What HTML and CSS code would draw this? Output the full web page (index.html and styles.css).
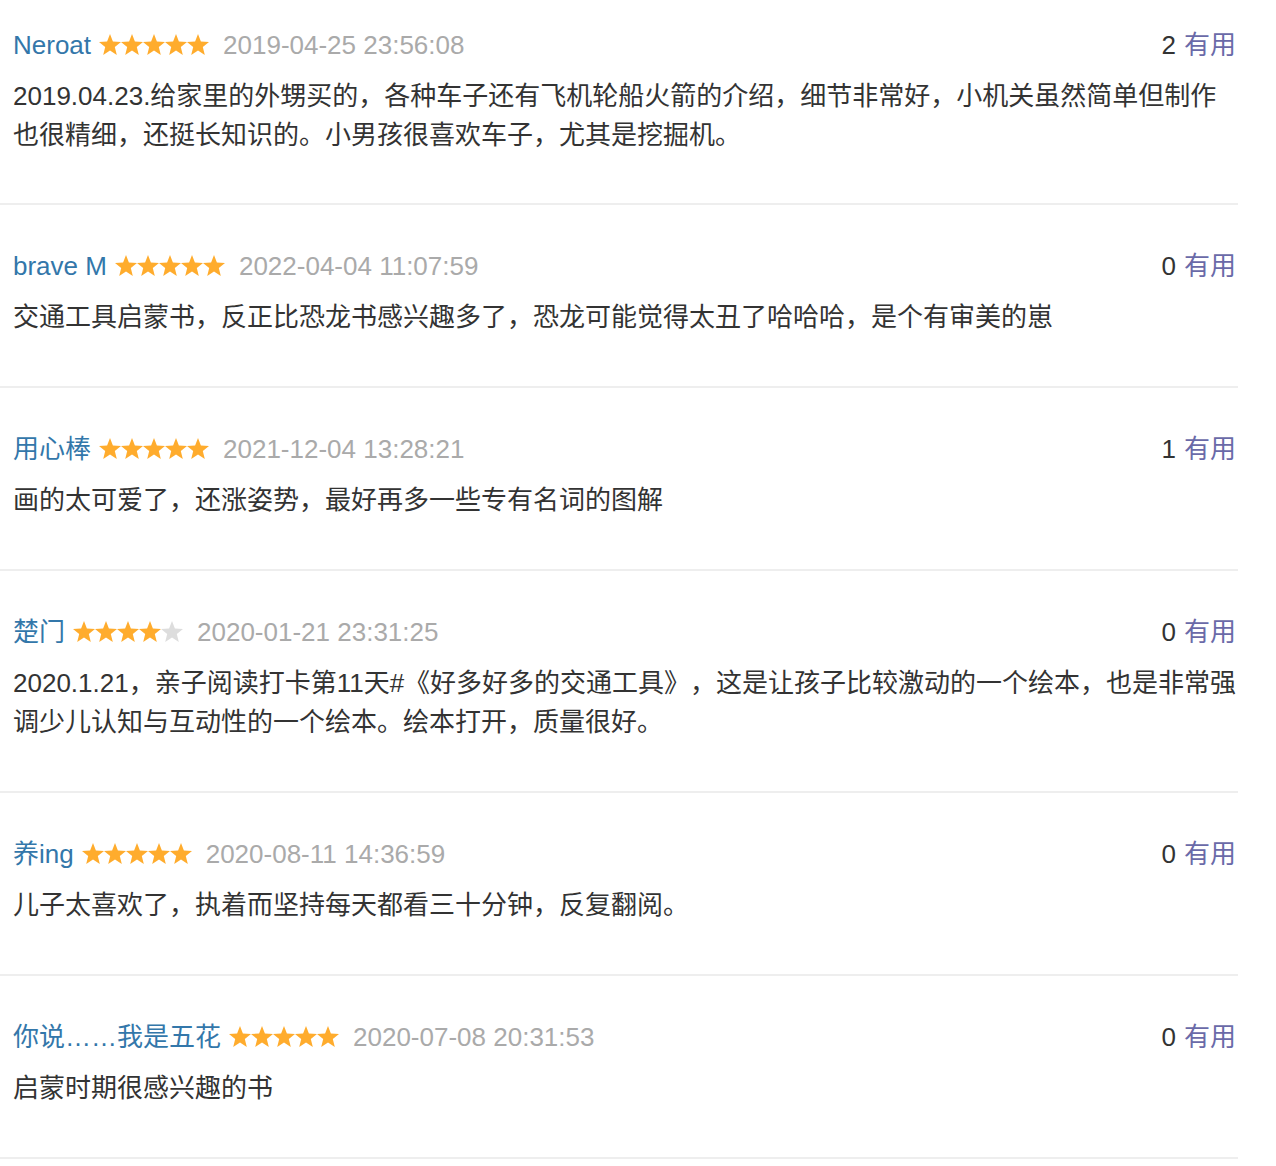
FILE: index.html
```html
<!DOCTYPE html>
<html lang="zh-CN">
<head>
<meta charset="utf-8">
<title>短评</title>
<link rel="stylesheet" href="styles.css">
</head>
<body>
<svg width="0" height="0" class="defs" aria-hidden="true">
  <defs>
    <symbol id="star" viewBox="0 0 22 21">
      <path d="M11 0L13.9 7.5L22 8L15.8 13.1L17.8 20.9L11 16.6L4.2 20.9L6.2 13.1L0 8L8.1 7.5Z"/>
    </symbol>
  </defs>
</svg>
<div class="list">
  <div class="item">
    <div class="head">
      <div class="info">
        <a class="name">Neroat</a>
        <span class="stars"><svg class="on"><use href="#star"/></svg><svg class="on"><use href="#star"/></svg><svg class="on"><use href="#star"/></svg><svg class="on"><use href="#star"/></svg><svg class="on"><use href="#star"/></svg></span>
        <span class="time">2019-04-25 23:56:08</span>
      </div>
      <div class="vote"><span class="count">2</span><a class="useful">有用</a></div>
    </div>
    <p class="text">2019.04.23.给家里的外甥买的，各种车子还有飞机轮船火箭的介绍，细节非常好，小机关虽然简单但制作也很精细，还挺长知识的。小男孩很喜欢车子，尤其是挖掘机。</p>
  </div>
  <div class="item">
    <div class="head">
      <div class="info">
        <a class="name">brave M</a>
        <span class="stars"><svg class="on"><use href="#star"/></svg><svg class="on"><use href="#star"/></svg><svg class="on"><use href="#star"/></svg><svg class="on"><use href="#star"/></svg><svg class="on"><use href="#star"/></svg></span>
        <span class="time">2022-04-04 11:07:59</span>
      </div>
      <div class="vote"><span class="count">0</span><a class="useful">有用</a></div>
    </div>
    <p class="text">交通工具启蒙书，反正比恐龙书感兴趣多了，恐龙可能觉得太丑了哈哈哈，是个有审美的崽</p>
  </div>
  <div class="item">
    <div class="head">
      <div class="info">
        <a class="name">用心棒</a>
        <span class="stars"><svg class="on"><use href="#star"/></svg><svg class="on"><use href="#star"/></svg><svg class="on"><use href="#star"/></svg><svg class="on"><use href="#star"/></svg><svg class="on"><use href="#star"/></svg></span>
        <span class="time">2021-12-04 13:28:21</span>
      </div>
      <div class="vote"><span class="count">1</span><a class="useful">有用</a></div>
    </div>
    <p class="text">画的太可爱了，还涨姿势，最好再多一些专有名词的图解</p>
  </div>
  <div class="item">
    <div class="head">
      <div class="info">
        <a class="name">楚门</a>
        <span class="stars"><svg class="on"><use href="#star"/></svg><svg class="on"><use href="#star"/></svg><svg class="on"><use href="#star"/></svg><svg class="on"><use href="#star"/></svg><svg class="off"><use href="#star"/></svg></span>
        <span class="time">2020-01-21 23:31:25</span>
      </div>
      <div class="vote"><span class="count">0</span><a class="useful">有用</a></div>
    </div>
    <p class="text">2020.1.21，亲子阅读打卡第11天#《好多好多的交通工具》，这是让孩子比较激动的一个绘本，也是非常强调少儿认知与互动性的一个绘本。绘本打开，质量很好。</p>
  </div>
  <div class="item">
    <div class="head">
      <div class="info">
        <a class="name">养ing</a>
        <span class="stars"><svg class="on"><use href="#star"/></svg><svg class="on"><use href="#star"/></svg><svg class="on"><use href="#star"/></svg><svg class="on"><use href="#star"/></svg><svg class="on"><use href="#star"/></svg></span>
        <span class="time">2020-08-11 14:36:59</span>
      </div>
      <div class="vote"><span class="count">0</span><a class="useful">有用</a></div>
    </div>
    <p class="text">儿子太喜欢了，执着而坚持每天都看三十分钟，反复翻阅。</p>
  </div>
  <div class="item">
    <div class="head">
      <div class="info">
        <a class="name">你说……我是五花</a>
        <span class="stars"><svg class="on"><use href="#star"/></svg><svg class="on"><use href="#star"/></svg><svg class="on"><use href="#star"/></svg><svg class="on"><use href="#star"/></svg><svg class="on"><use href="#star"/></svg></span>
        <span class="time">2020-07-08 20:31:53</span>
      </div>
      <div class="vote"><span class="count">0</span><a class="useful">有用</a></div>
    </div>
    <p class="text">启蒙时期很感兴趣的书</p>
  </div>
</div>
</body>
</html>
```

FILE: styles.css
```css
html, body {
  margin: 0;
  padding: 0;
  background: #fff;
}
body {
  font-family: "Liberation Sans", Arial, "Noto Sans CJK SC", sans-serif;
  font-size: 26px;
  color: #333;
  text-spacing-trim: space-all;
}
.defs {
  position: absolute;
  width: 0;
  height: 0;
  overflow: hidden;
}
.list {
  width: 1238px;
}
.item {
  padding: 43px 0 49px 13px;
  border-bottom: 2px solid #eeeeee;
}
.item:first-child {
  padding-top: 27px;
  padding-bottom: 48px;
}
.head {
  display: flex;
  justify-content: space-between;
  align-items: center;
  height: 36px;
  line-height: 36px;
  padding-right: 2px;
}
.info {
  display: flex;
  align-items: center;
  white-space: nowrap;
}
.name {
  color: #3377aa;
  margin-right: 8px;
}
.stars {
  display: flex;
  align-items: center;
  margin-right: 14px;
}
.stars svg {
  width: 22px;
  height: 21px;
  margin-top: -2px;
}
.stars .on {
  fill: #ffac2d;
}
.stars .off {
  fill: #dddddd;
}
.time {
  color: #aaaaaa;
}
.vote {
  white-space: nowrap;
}
.count {
  color: #333;
  margin-right: 8px;
}
.useful {
  color: #6a6aa8;
}
.text {
  margin: 14px 0 0;
  line-height: 39px;
  color: #333;
}
```
